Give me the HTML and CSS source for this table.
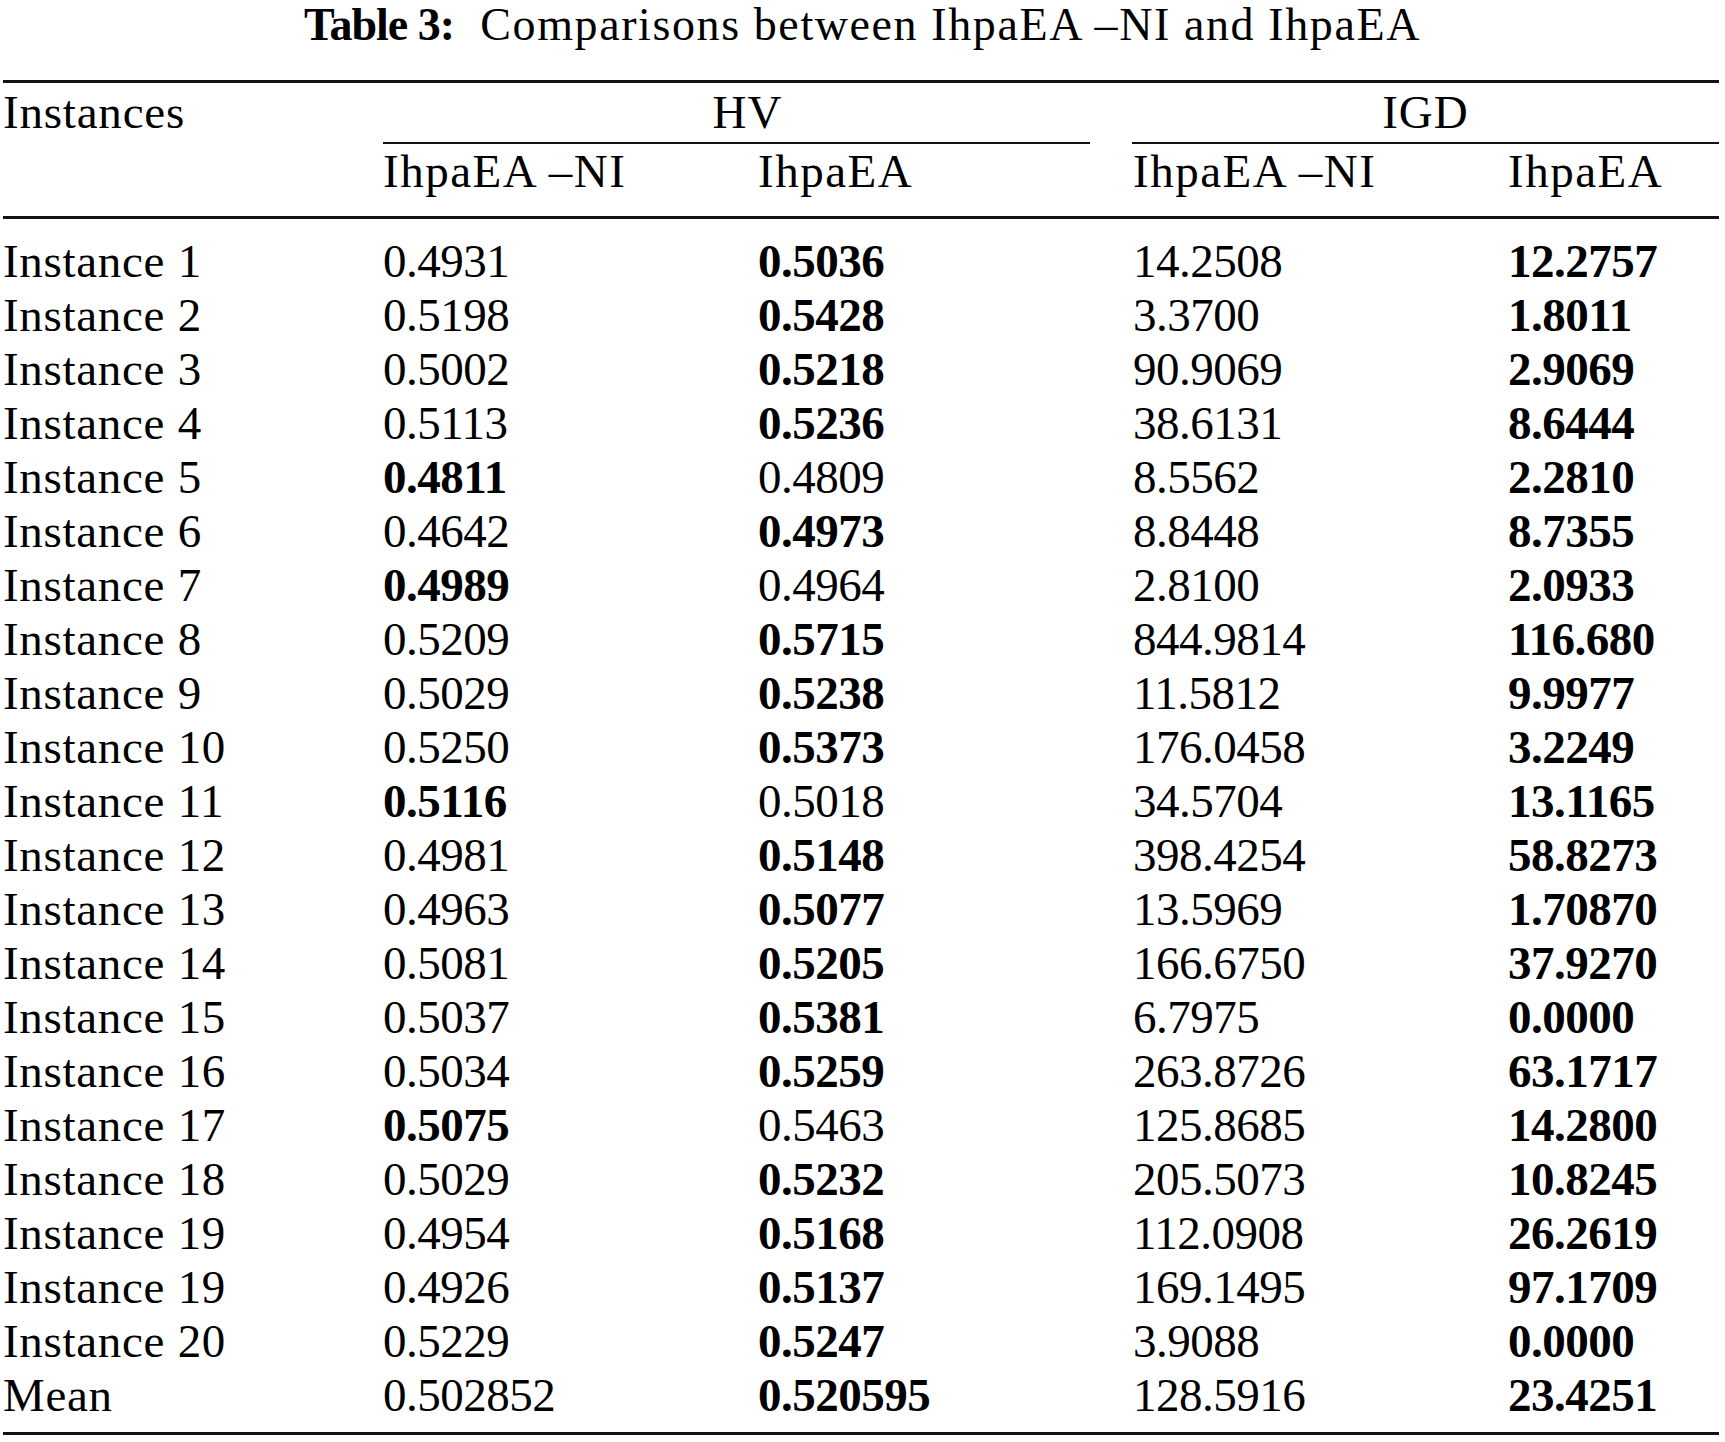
FILE: index.html
```html
<!DOCTYPE html>
<html>
<head>
<meta charset="utf-8">
<link rel="stylesheet" href="styles.css">
</head>
<body>
<div class="page">
  <h1 class="title"><b>Table 3:</b>&nbsp; Comparisons between IhpaEA –NI and IhpaEA</h1>
  <div class="table">
    <div class="head">
      <div class="h-inst">Instances</div>
      <div class="h-group h-hv">HV</div>
      <div class="h-group h-igd">IGD</div>
      <div class="h-empty"></div>
      <div class="h-sub">IhpaEA –NI</div>
      <div class="h-sub">IhpaEA</div>
      <div class="h-sub">IhpaEA –NI</div>
      <div class="h-sub">IhpaEA</div>
    </div>
    <div class="body">
      <div class="row"><span class="lbl">Instance 1</span><span>0.4931</span><span class="b">0.5036</span><span>14.2508</span><span class="b">12.2757</span></div>
      <div class="row"><span class="lbl">Instance 2</span><span>0.5198</span><span class="b">0.5428</span><span>3.3700</span><span class="b">1.8011</span></div>
      <div class="row"><span class="lbl">Instance 3</span><span>0.5002</span><span class="b">0.5218</span><span>90.9069</span><span class="b">2.9069</span></div>
      <div class="row"><span class="lbl">Instance 4</span><span>0.5113</span><span class="b">0.5236</span><span>38.6131</span><span class="b">8.6444</span></div>
      <div class="row"><span class="lbl">Instance 5</span><span class="b">0.4811</span><span>0.4809</span><span>8.5562</span><span class="b">2.2810</span></div>
      <div class="row"><span class="lbl">Instance 6</span><span>0.4642</span><span class="b">0.4973</span><span>8.8448</span><span class="b">8.7355</span></div>
      <div class="row"><span class="lbl">Instance 7</span><span class="b">0.4989</span><span>0.4964</span><span>2.8100</span><span class="b">2.0933</span></div>
      <div class="row"><span class="lbl">Instance 8</span><span>0.5209</span><span class="b">0.5715</span><span>844.9814</span><span class="b">116.680</span></div>
      <div class="row"><span class="lbl">Instance 9</span><span>0.5029</span><span class="b">0.5238</span><span>11.5812</span><span class="b">9.9977</span></div>
      <div class="row"><span class="lbl">Instance 10</span><span>0.5250</span><span class="b">0.5373</span><span>176.0458</span><span class="b">3.2249</span></div>
      <div class="row"><span class="lbl">Instance 11</span><span class="b">0.5116</span><span>0.5018</span><span>34.5704</span><span class="b">13.1165</span></div>
      <div class="row"><span class="lbl">Instance 12</span><span>0.4981</span><span class="b">0.5148</span><span>398.4254</span><span class="b">58.8273</span></div>
      <div class="row"><span class="lbl">Instance 13</span><span>0.4963</span><span class="b">0.5077</span><span>13.5969</span><span class="b">1.70870</span></div>
      <div class="row"><span class="lbl">Instance 14</span><span>0.5081</span><span class="b">0.5205</span><span>166.6750</span><span class="b">37.9270</span></div>
      <div class="row"><span class="lbl">Instance 15</span><span>0.5037</span><span class="b">0.5381</span><span>6.7975</span><span class="b">0.0000</span></div>
      <div class="row"><span class="lbl">Instance 16</span><span>0.5034</span><span class="b">0.5259</span><span>263.8726</span><span class="b">63.1717</span></div>
      <div class="row"><span class="lbl">Instance 17</span><span class="b">0.5075</span><span>0.5463</span><span>125.8685</span><span class="b">14.2800</span></div>
      <div class="row"><span class="lbl">Instance 18</span><span>0.5029</span><span class="b">0.5232</span><span>205.5073</span><span class="b">10.8245</span></div>
      <div class="row"><span class="lbl">Instance 19</span><span>0.4954</span><span class="b">0.5168</span><span>112.0908</span><span class="b">26.2619</span></div>
      <div class="row"><span class="lbl">Instance 19</span><span>0.4926</span><span class="b">0.5137</span><span>169.1495</span><span class="b">97.1709</span></div>
      <div class="row"><span class="lbl">Instance 20</span><span>0.5229</span><span class="b">0.5247</span><span>3.9088</span><span class="b">0.0000</span></div>
      <div class="row"><span class="lbl">Mean</span><span>0.502852</span><span class="b">0.520595</span><span>128.5916</span><span class="b">23.4251</span></div>
    </div>
  </div>
</div>
</body>
</html>
```

FILE: styles.css
```css
html, body {
  margin: 0;
  padding: 0;
  background: #ffffff;
}

.page {
  width: 1725px;
  font-family: "Liberation Serif", "Times New Roman", serif;
  color: #000;
}

.title {
  margin: 0;
  height: 80px;
  padding-top: 0;
  font-size: 46px;
  line-height: 50px;
  font-weight: normal;
  letter-spacing: 1.6px;
  text-align: center;
  white-space: pre;
}

.title b {
  font-weight: bold;
  letter-spacing: -1px;
}

.table {
  margin-left: 3px;
  width: 1716px;
  border-top: 3px solid #111;
  border-bottom: 3px solid #111;
  font-size: 47px;
  line-height: 54px;
}

.head {
  display: grid;
  grid-template-columns: 380px 375px 375px 375px 1fr;
  border-bottom: 3px solid #111;
  padding-top: 2px;
  padding-bottom: 18px;
}

.h-inst {
  grid-column: 1;
  padding-bottom: 4px;
  letter-spacing: 0.8px;
}

.h-group {
  text-align: center;
  border-bottom: 2px solid #111;
  padding-bottom: 3px;
  letter-spacing: 1px;
}

.h-hv {
  grid-column: 2 / 4;
  margin-right: 43px;
  padding-left: 22px;
}

.h-igd {
  grid-column: 4 / 6;
  margin-left: -1px;
}

.h-sub {
  white-space: nowrap;
  letter-spacing: 1.5px;
}

.body {
  padding-top: 15px;
  padding-bottom: 10px;
}

.row {
  display: grid;
  grid-template-columns: 380px 375px 375px 375px 1fr;
  height: 54px;
  white-space: nowrap;
  letter-spacing: -0.5px;
}

.row .lbl {
  letter-spacing: 0.7px;
}

.b {
  font-weight: bold;
}
```
